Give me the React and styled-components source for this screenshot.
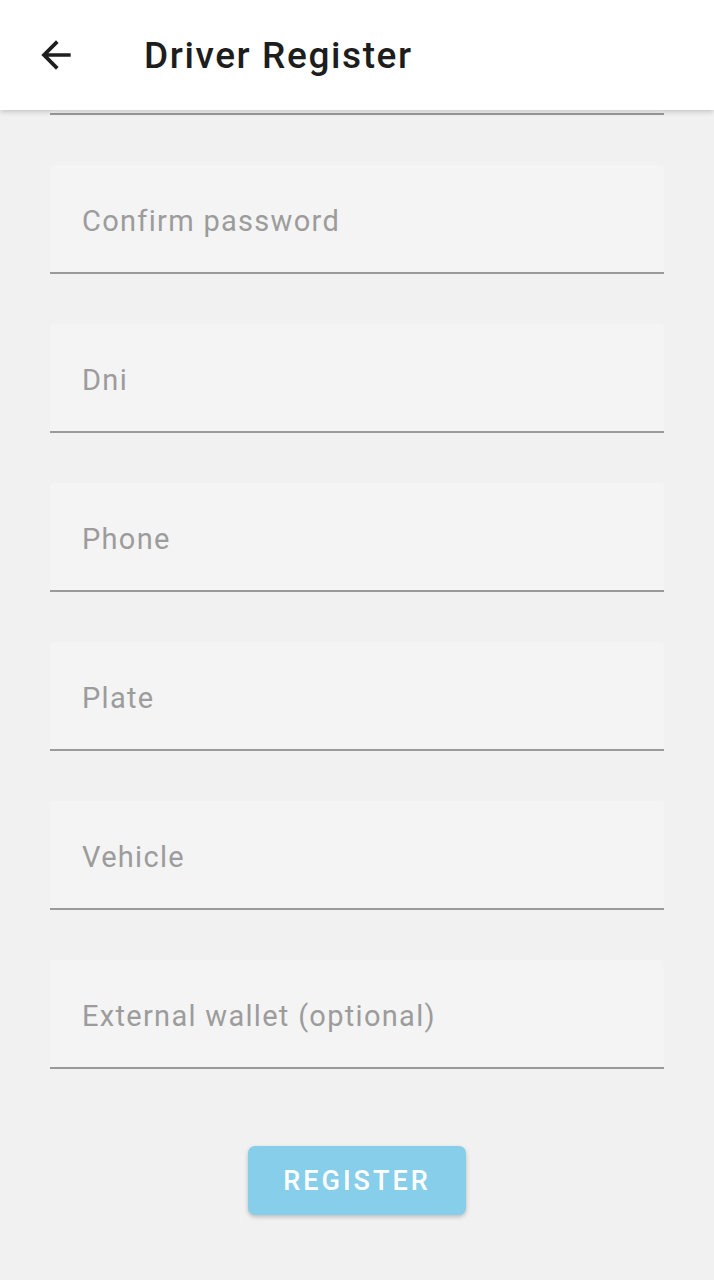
import styled, { createGlobalStyle } from "styled-components";

const GlobalStyle = createGlobalStyle`
  html, body {
    margin: 0;
    padding: 0;
    background: #f1f1f1;
    font-family: Roboto, "Noto Sans", sans-serif;
  }
`;

const Screen = styled.div`
  width: 714px;
  height: 1280px;
  display: flex;
  flex-direction: column;
  background: #f1f1f1;
  overflow: hidden;
`;

const AppBar = styled.header`
  height: 110px;
  flex-shrink: 0;
  display: flex;
  align-items: center;
  background: #ffffff;
  box-shadow: 0 2px 5px rgba(0, 0, 0, 0.18);
  position: relative;
  z-index: 1;
`;

const BackButton = styled.button`
  width: 44px;
  height: 44px;
  margin-left: 34px;
  padding: 0;
  border: 0;
  background: transparent;
  display: flex;
  align-items: center;
  justify-content: center;
`;

const Title = styled.h1`
  margin: 0 0 0 66px;
  font-size: 37px;
  font-weight: 500;
  color: #1d1d1d;
  letter-spacing: 1.6px;
`;

const Form = styled.div`
  display: flex;
  flex-direction: column;
  gap: 50px;
  padding: 0 50px;
`;

const Field = styled.div`
  height: ${(p) => (p.$partial ? "3px" : "107px")};
  display: flex;
  align-items: center;
  padding-left: 32px;
  background: #f4f4f4;
  border-bottom: 2px solid #9a9a9a;
  border-radius: 4px 4px 0 0;
`;

const Placeholder = styled.span`
  font-size: 29px;
  letter-spacing: 1.3px;
  color: #9c9c9c;
  margin-top: 5px;
`;

const Actions = styled.div`
  display: flex;
  justify-content: center;
  padding-top: 77px;
`;

const RegisterButton = styled.button`
  width: 218px;
  height: 69px;
  padding: 0;
  border: 0;
  border-radius: 7px;
  background: #87ceeb;
  color: #ffffff;
  font-family: Roboto, sans-serif;
  font-size: 27px;
  font-weight: 500;
  letter-spacing: 3px;
  box-shadow: 0 2px 4px rgba(0, 0, 0, 0.22);
`;

const fields = [
  "Confirm password",
  "Dni",
  "Phone",
  "Plate",
  "Vehicle",
  "External wallet (optional)",
];

const BackArrow = () => (
  <svg width="44" height="44" viewBox="0 0 24 24" fill="#1f1f1f">
    <path d="M20 11H7.83l5.59-5.59L12 4l-8 8 8 8 1.41-1.41L7.83 13H20v-2z" />
  </svg>
);

export default function App() {
  return (
    <Screen>
      <GlobalStyle />
      <AppBar>
        <BackButton aria-label="Back">
          <BackArrow />
        </BackButton>
        <Title>Driver Register</Title>
      </AppBar>
      <Form>
        <Field $partial />
        {fields.map((label) => (
          <Field key={label}>
            <Placeholder>{label}</Placeholder>
          </Field>
        ))}
      </Form>
      <Actions>
        <RegisterButton>REGISTER</RegisterButton>
      </Actions>
    </Screen>
  );
}
